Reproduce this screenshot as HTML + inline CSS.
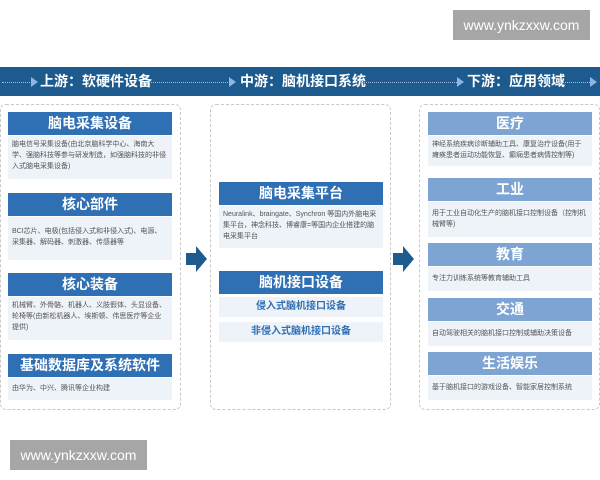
<!DOCTYPE html>
<html><head><meta charset="utf-8"><style>
*{margin:0;padding:0;box-sizing:border-box}
body{width:600px;height:480px;background:#fff;position:relative;overflow:hidden;font-family:"Liberation Sans","Noto Sans CJK SC",sans-serif}
.a{position:absolute}
.wm{background:#a6a6a6;color:#fff;font-size:14px;text-align:center;line-height:30px}
.band{left:0;top:67px;width:600px;height:29px;background:#1d5b8f}
.bt{color:#fff;font-weight:bold;font-size:14px;top:67px;line-height:29px}
.dots{border-top:1px dotted #9fc0e0;top:82px;height:0}
.tri{width:0;height:0;border-left:7px solid #8fb6e0;border-top:5px solid transparent;border-bottom:5px solid transparent;top:77px}
.panel{border:1px dashed #c8c8c8;border-radius:6px}
.h{background:#2f6fb4;color:#fff;font-weight:bold;font-size:14px;text-align:center;line-height:23px}
.hl{background:#7da4d2}
.t{background:#eef2f9;color:#555;font-size:7px;line-height:11px;padding:3px 4px}
.s{background:#eef2f9;color:#2f6fb4;font-weight:bold;font-size:10px;text-align:center;line-height:20px}
</style></head><body>
<div class="a wm" style="left:453px;top:10px;width:137px;height:30px">www.ynkzxxw.com</div>
<div class="a wm" style="left:10px;top:440px;width:137px;height:30px">www.ynkzxxw.com</div>

<div class="a band"></div>
<div class="a dots" style="left:2px;width:30px"></div><div class="a tri" style="left:31px"></div>
<div class="a bt" style="left:40px">上游：软硬件设备</div>
<div class="a dots" style="left:145px;width:85px"></div><div class="a tri" style="left:229px"></div>
<div class="a bt" style="left:240px">中游：脑机接口系统</div>
<div class="a dots" style="left:360px;width:97px"></div><div class="a tri" style="left:457px"></div>
<div class="a bt" style="left:467px">下游：应用领域</div>
<div class="a dots" style="left:560px;width:30px"></div><div class="a tri" style="left:590px"></div>

<div class="a panel" style="left:0;top:104px;width:181px;height:306px"></div>
<div class="a panel" style="left:210px;top:104px;width:181px;height:306px"></div>
<div class="a panel" style="left:419px;top:104px;width:181px;height:306px"></div>

<div class="a h" style="left:8px;top:112px;width:164px;height:23px">脑电采集设备</div>
<div class="a t" style="left:8px;top:136px;width:164px;height:43px">脑电信号采集设备(由北京脑科学中心、海南大学、强脑科技等参与研发制造，如强脑科技的非侵入式脑电采集设备)</div>
<div class="a h" style="left:8px;top:193px;width:164px;height:23px">核心部件</div>
<div class="a t" style="left:8px;top:217px;width:164px;height:43px;padding-top:9px">BCI芯片、电极(包括侵入式和非侵入式)、电源、采集器、解码器、刺激器、传感器等</div>
<div class="a h" style="left:8px;top:273px;width:164px;height:23px">核心装备</div>
<div class="a t" style="left:8px;top:297px;width:164px;height:43px">机械臂、外骨骼、机器人、义肢假体、头显设备、轮椅等(由新松机器人、埃斯顿、伟思医疗等企业提供)</div>
<div class="a h" style="left:8px;top:354px;width:164px;height:23px">基础数据库及系统软件</div>
<div class="a t" style="left:8px;top:378px;width:164px;height:22px;padding-top:5px">由华为、中兴、腾讯等企业构建</div>

<div class="a h" style="left:219px;top:182px;width:164px;height:23px">脑电采集平台</div>
<div class="a t" style="left:219px;top:206px;width:164px;height:42px">Neuralink、braingate、Synchron 等国内外脑电采集平台，神念科技、博睿康=等国内企业搭建的脑电采集平台</div>
<div class="a h" style="left:219px;top:271px;width:164px;height:23px">脑机接口设备</div>
<div class="a s" style="left:219px;top:297px;width:164px;height:20px">侵入式脑机接口设备</div>
<div class="a s" style="left:219px;top:322px;width:164px;height:20px">非侵入式脑机接口设备</div>

<div class="a h hl" style="left:428px;top:112px;width:164px;height:23px">医疗</div>
<div class="a t" style="left:428px;top:136px;width:164px;height:30px">神经系统疾病诊断辅助工具、康复治疗设备(用于瘫痪患者运动功能恢复、癫痫患者病情控制等)</div>
<div class="a h hl" style="left:428px;top:178px;width:164px;height:23px">工业</div>
<div class="a t" style="left:428px;top:202px;width:164px;height:35px;padding-top:6px">用于工业自动化生产的脑机接口控制设备（控制机械臂等)</div>
<div class="a h hl" style="left:428px;top:243px;width:164px;height:23px">教育</div>
<div class="a t" style="left:428px;top:267px;width:164px;height:24px;padding-top:6px">专注力训练系统等教育辅助工具</div>
<div class="a h hl" style="left:428px;top:298px;width:164px;height:23px">交通</div>
<div class="a t" style="left:428px;top:322px;width:164px;height:24px;padding-top:6px">自动驾驶相关的脑机接口控制或辅助决策设备</div>
<div class="a h hl" style="left:428px;top:352px;width:164px;height:23px">生活娱乐</div>
<div class="a t" style="left:428px;top:376px;width:164px;height:24px;padding-top:6px">基于脑机接口的游戏设备、智能家居控制系统</div>

<svg class="a" style="left:186px;top:246px" width="22" height="26"><polygon points="0,7 10,7 10,0 21,13 10,26 10,19 0,19" fill="#1d5b8f"/></svg>
<svg class="a" style="left:393px;top:246px" width="22" height="26"><polygon points="0,7 10,7 10,0 21,13 10,26 10,19 0,19" fill="#1d5b8f"/></svg>
</body></html>
